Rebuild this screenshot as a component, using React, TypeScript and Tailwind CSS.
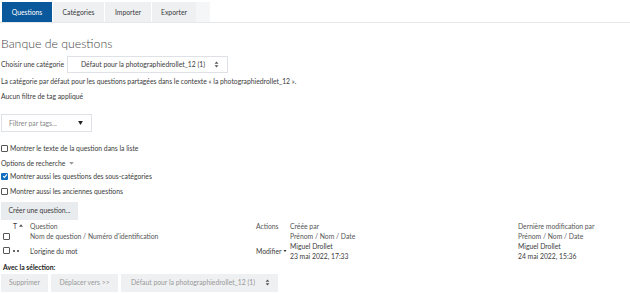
import React from "react";

const Box = ({ checked = false }: { checked?: boolean }) =>
  checked ? (
    <span className="inline-flex h-[7px] w-[7px] items-center justify-center rounded-[1px] bg-[#0f6cbf]">
      <svg viewBox="0 0 8 8" className="h-[6px] w-[6px]">
        <path d="M1.5 4.2 L3.2 5.9 L6.6 1.8" stroke="white" strokeWidth="1.4" fill="none" />
      </svg>
    </span>
  ) : (
    <span className="inline-block h-[7px] w-[7px] rounded-[1px] border border-[#555] bg-white" />
  );

const Spinner = () => (
  <svg viewBox="0 0 6 8" className="h-[7px] w-[5px]">
    <path d="M3 0.5 L5.3 3.2 H0.7 Z M3 7.5 L5.3 4.8 H0.7 Z" fill="#555" />
  </svg>
);

export default function App() {
  return (
    <div className="h-[293px] w-[630px] overflow-hidden bg-white text-[6.8px] leading-none text-[#3c3c3c] [font-family:Lato,'Liberation_Sans',sans-serif]">
      {/* tabs */}
      <div className="flex border-b border-[#e5e7ea] px-[2px] pt-[2px]">
        <div className="flex h-[20px] w-[208px] bg-[#f5f6f7]">
          <div className="flex w-[50px] items-center justify-center bg-[#0a589c] text-white">Questions</div>
          <div className="flex w-[52px] items-center justify-center border-l border-white bg-[#eef0f2]">Catégories</div>
          <div className="flex w-[47px] items-center justify-center border-l border-white bg-[#eef0f2]">Importer</div>
          <div className="flex w-[45px] items-center justify-center border-l border-white bg-[#eef0f2]">Exporter</div>
        </div>
      </div>

      <div className="px-[1px]">
        <div className="mt-[13px] text-[12.3px] font-light leading-[16px] text-[#444]">Banque de questions</div>

        <div className="mt-[4px] flex items-center gap-[3px]">
          <span>Choisir une catégorie</span>
          <div className="flex h-[17px] w-[161px] items-center justify-between border border-[#dee2e6] pl-[13px] pr-[8px]">
            <span>Défaut pour la photographiedrollet_12 (1)</span>
            <Spinner />
          </div>
        </div>

        <div className="mt-[4px] leading-[8px]">La catégorie par défaut pour les questions partagées dans le contexte « la photographiedrollet_12 ».</div>
        <div className="mt-[7px] leading-[8px]">Aucun filtre de tag appliqué</div>

        <div className="mt-[14px] flex h-[18px] w-[91px] items-center justify-between border border-[#dee2e6] pl-[7px] pr-[8px]">
          <span className="text-[#888]">Filtrer par tags...</span>
          <svg viewBox="0 0 6 5" className="h-[4px] w-[5px]">
            <path d="M0 0 H6 L3 5 Z" fill="#222" />
          </svg>
        </div>

        <div className="mt-[13px] flex items-center gap-[2px]">
          <Box />
          <span>Montrer le texte de la question dans la liste</span>
        </div>
        <div className="mt-[8px] flex items-center gap-[4px]">
          <span>Options de recherche</span>
          <svg viewBox="0 0 6 4" className="h-[3px] w-[5px]">
            <path d="M0 0 H6 L3 3.5 Z" fill="#999" />
          </svg>
        </div>
        <div className="mt-[6px] flex items-center gap-[2px]">
          <Box checked />
          <span>Montrer aussi les questions des sous-catégories</span>
        </div>
        <div className="mt-[8px] flex items-center gap-[2px]">
          <Box />
          <span>Montrer aussi les anciennes questions</span>
        </div>

        <div className="mt-[7px] flex h-[18px] w-[77px] items-center justify-center bg-[#e9ecef]">Créer une question...</div>

        {/* table */}
        <div className="mt-[1px] grid grid-cols-[9px_18px_226px_34px_228px_1fr] pl-[2px] leading-[10px]">
          <div className="row-span-2 flex items-end pb-[1px]"><Box /></div>
          <div className="flex items-center gap-[2px] pl-[1px]">
            <span>T</span>
            <svg viewBox="0 0 6 4" className="h-[3px] w-[4px]"><path d="M3 0 L6 4 H0 Z" fill="#555" /></svg>
          </div>
          <div className="text-[#555]">Question</div>
          <div className="text-[#555]">Actions</div>
          <div className="text-[#555]">Créée par</div>
          <div className="text-[#555]">Dernière modification par</div>
          <div />
          <div className="text-[#555]">Nom de question / Numéro d'identification</div>
          <div />
          <div className="text-[#555]">Prénom / Nom / Date</div>
          <div className="text-[#555]">Prénom / Nom / Date</div>

          <div className="row-span-2 flex items-center"><Box /></div>
          <div className="row-span-2 flex items-center gap-[2px] pl-[1px]">
            <span className="h-[2px] w-[2px] rounded-full bg-[#333]" />
            <span className="h-[2px] w-[2px] rounded-full bg-[#333]" />
          </div>
          <div className="row-span-2 flex items-center">L'origine du mot</div>
          <div className="row-span-2 flex items-center gap-[2px]">
            <span>Modifier</span>
            <svg viewBox="0 0 6 4" className="h-[2px] w-[4px]"><path d="M0 0 H6 L3 4 Z" fill="#333" /></svg>
          </div>
          <div>Miguel Drollet</div>
          <div>Miguel Drollet</div>
          <div>23 mai 2022, 17:33</div>
          <div>24 mai 2022, 15:36</div>
        </div>

        <div className="mt-[1px] pl-[2px] font-bold leading-[10px] text-[#222]">Avec la sélection:</div>
        <div className="mt-[2px] flex gap-[3px] text-[#999]">
          <div className="flex h-[18px] w-[47px] items-center justify-center bg-[#eef0f2]">Supprimer</div>
          <div className="flex h-[18px] w-[67px] items-center justify-center bg-[#eef0f2]">Déplacer vers &gt;&gt;</div>
          <div className="flex h-[18px] w-[157px] items-center justify-between bg-[#eef0f2] pl-[10px] pr-[8px]">
            <span>Défaut pour la photographiedrollet_12 (1)</span>
            <Spinner />
          </div>
        </div>
      </div>
    </div>
  );
}
